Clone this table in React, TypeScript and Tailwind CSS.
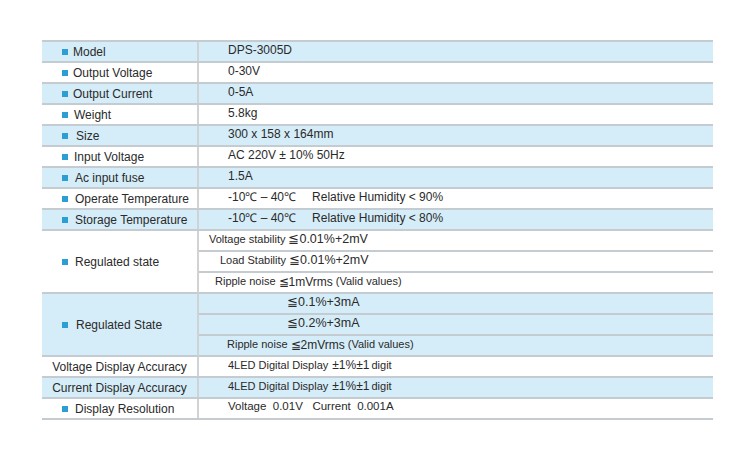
import React from "react";

const BLUE = "bg-[#d5edf8]";

function Bullet() {
  return <span className="inline-block w-[6px] h-[6px] bg-[#2b9fd3] mr-[5px] shrink-0" />;
}

type Row = { label: string; value: React.ReactNode; blue: boolean; pl?: number; bullet?: boolean };

const LeftCell = ({ children, className = "" }: { children: React.ReactNode; className?: string }) => (
  <div className={`w-[157px] shrink-0 flex items-center border-r-2 border-[#cfd3d6] ${className}`}>{children}</div>
);

function SimpleRow({ label, value, blue, textPl, bulletPl, plain }: { label: string; value: React.ReactNode; blue: boolean; textPl: number; bulletPl?: number; plain?: boolean }) {
  return (
    <div className={`flex h-[21px] border-b-2 border-[#c4ccd1] ${blue ? BLUE : "bg-white"}`}>
      <LeftCell className={plain ? "justify-center" : "pl-[20px]"}>
        {!plain && <Bullet />}
        <span style={plain ? undefined : { marginLeft: textPl }}>{label}</span>
      </LeftCell>
      <div className="flex-1 flex items-center pl-[29px] pb-[3px]">{value}</div>
    </div>
  );
}

export default function App() {
  const rows: { label: string; value: React.ReactNode; blue: boolean; pl: number }[] = [
    { label: "Model", value: "DPS-3005D", blue: true, pl: 0 },
    { label: "Output Voltage", value: "0-30V", blue: false, pl: 0 },
    { label: "Output Current", value: "0-5A", blue: true, pl: 0 },
    { label: "Weight", value: "5.8kg", blue: false, pl: 1 },
    { label: "Size", value: "300 x 158 x 164mm", blue: true, pl: 3 },
    { label: "Input Voltage", value: "AC 220V ± 10% 50Hz", blue: false, pl: 1 },
    { label: "Ac input fuse", value: "1.5A", blue: true, pl: 2 },
    {
      label: "Operate Temperature",
      value: (
        <span>
          -10℃ – 40℃<span className="ml-[16px]">Relative Humidity &lt; 90%</span>
        </span>
      ),
      blue: false,
      pl: 2,
    },
    {
      label: "Storage Temperature",
      value: (
        <span>
          -10℃ – 40℃<span className="ml-[16px]">Relative Humidity &lt; 80%</span>
        </span>
      ),
      blue: true,
      pl: 2,
    },
  ];

  const sub = "h-[21px] flex items-center pb-[2px] border-b-2 border-[#c4ccd1]";

  return (
    <div
      className="w-[755px] h-[453px] bg-white pt-[40px] pl-[42px] text-[12px] text-[#2a2a2a]"
      style={{ fontFamily: "'Liberation Sans', Arial, sans-serif" }}
    >
      <div className="w-[671px] border-t-2 border-[#c4ccd1]">
        {rows.map((r) => (
          <SimpleRow key={r.label} label={r.label} value={r.value} blue={r.blue} textPl={r.pl} />
        ))}

        {/* Regulated state group */}
        <div className="flex bg-white">
          <LeftCell className="pl-[20px] border-b-2 border-b-[#c4ccd1]">
            <Bullet />
            <span className="ml-[2px]">Regulated state</span>
          </LeftCell>
          <div className="flex-1 flex flex-col">
            <div className={`${sub} pl-[10px]`}>
              <span className="text-[11px]">Voltage stability</span>
              <span className="ml-[3px] text-[12.5px]">≦0.01%+2mV</span>
            </div>
            <div className={`${sub} pl-[21px]`}>
              <span className="text-[11px]">Load Stability</span>
              <span className="ml-[3px] text-[12.5px]">≦0.01%+2mV</span>
            </div>
            <div className={`${sub} pl-[16px]`}>
              <span className="text-[11px]">Ripple noise</span>
              <span className="ml-[3px] text-[12px]">≦1mVrms</span>
              <span className="ml-[3px] text-[11px]">(Valid values)</span>
            </div>
          </div>
        </div>

        {/* Regulated State group */}
        <div className={`flex ${BLUE}`}>
          <LeftCell className="pl-[20px] border-b-2 border-b-[#c4ccd1]">
            <Bullet />
            <span className="ml-[3px]">Regulated State</span>
          </LeftCell>
          <div className="flex-1 flex flex-col">
            <div className={`${sub} pl-[88px]`}>
              <span className="text-[12.5px]">≦0.1%+3mA</span>
            </div>
            <div className={`${sub} pl-[88px]`}>
              <span className="text-[12.5px]">≦0.2%+3mA</span>
            </div>
            <div className={`${sub} pl-[28px]`}>
              <span className="text-[11px]">Ripple noise</span>
              <span className="ml-[3px] text-[12px]">≦2mVrms</span>
              <span className="ml-[3px] text-[11px]">(Valid values)</span>
            </div>
          </div>
        </div>

        <SimpleRow
          label="Voltage Display Accuracy"
          plain
          blue={false}
          textPl={0}
          value={
            <span>
              <span className="text-[11px]">4LED Digital Display</span>
              <span className="ml-[4px] text-[12px]">±1%±1</span>
              <span className="ml-[2px] text-[11px]">digit</span>
            </span>
          }
        />
        <SimpleRow
          label="Current Display Accuracy"
          plain
          blue={true}
          textPl={0}
          value={
            <span>
              <span className="text-[11px]">4LED Digital Display</span>
              <span className="ml-[4px] text-[12px]">±1%±1</span>
              <span className="ml-[2px] text-[11px]">digit</span>
            </span>
          }
        />
        <SimpleRow
          label="Display Resolution"
          blue={false}
          textPl={2}
          value={
            <span className="text-[11.5px]">
              Voltage&nbsp; 0.01V&nbsp;&nbsp; Current&nbsp; 0.001A
            </span>
          }
        />
      </div>
    </div>
  );
}
